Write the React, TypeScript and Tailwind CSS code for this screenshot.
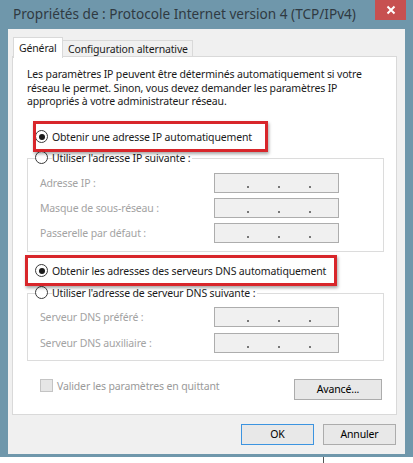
import React from "react";

const Radio = ({checked}: {checked?: boolean}) => (
  <span className="w-[13px] h-[13px] rounded-full border border-[#3a3a3a] bg-white flex items-center justify-center shrink-0">
    {checked && <span className="w-[6px] h-[6px] rounded-full bg-[#1a1a1a]" />}
  </span>
);

const IpBox = () => (
  <div className="w-[125px] h-[20px] bg-[#f0f0f0] border border-[#adadad] flex items-end pb-[4px] pl-[32px] gap-[29px]">
    <span className="w-[2px] h-[2px] bg-[#777]" />
    <span className="w-[2px] h-[2px] bg-[#777]" />
    <span className="w-[2px] h-[2px] bg-[#777]" />
  </div>
);

const Field = ({label}: {label: string}) => (
  <div className="flex items-center h-[20px]">
    <span className="w-[174px] text-[#a3a3a3]">{label}</span>
    <IpBox />
  </div>
);

const Btn = ({children, primary}: {children: React.ReactNode; primary?: boolean}) => (
  <button className={primary ? "w-[73px] h-[21px] border border-[#3c94e0] bg-[#e8e8e8] text-black" : "w-[73px] h-[21px] border border-[#acacac] bg-[#e8e8e8] text-black"}>
    {children}
  </button>
);

export default function App() {
  return (
    <div className="w-[413px] h-[463px] bg-white overflow-hidden font-['Noto_Sans',sans-serif] text-[10.5px] tracking-[-0.15px] leading-[14px] text-[#1a1a1a]">
      {/* window frame */}
      <div className="h-[457px] bg-[#6f97ab] pl-[8px] pr-[8px] pb-[5px] flex flex-col">
        <div className="h-[29px] flex items-start shrink-0">
          <div className="flex-1 min-w-0 pl-[5px] pt-[3px] text-[13.6px] tracking-normal leading-[22px] text-[#2f3a42] whitespace-nowrap">
            Propriétés de : Protocole Internet version 4 (TCP/IPv4)
          </div>
          <div className="w-[31px] h-[20px] mr-[-1px] shrink-0 bg-[#c75050] flex items-center justify-center">
            <svg width="10" height="10" viewBox="0 0 10 10">
              <path d="M1.5 1.5L8.5 8.5M8.5 1.5L1.5 8.5" stroke="white" strokeWidth="2" />
            </svg>
          </div>
        </div>

        <div className="flex-1 bg-[#f0f0f0] pl-[4px] pr-[9px] pt-[8px] pb-[9px] flex flex-col">
          {/* tabs */}
          <div className="flex items-end h-[19px] pl-[1px]">
            <div className="relative z-10 h-[21px] -mb-[2px] w-[50px] bg-white border border-b-0 border-[#d9d9d9] pl-[5px] pt-[3px] leading-[14px]">Général</div>
            <div className="h-[16px] w-[130px] bg-[#f0f0f0] border border-l-0 border-b-0 border-[#d9d9d9] pl-[5px] pt-[1px] leading-[14px] whitespace-nowrap">Configuration alternative</div>
          </div>

          {/* tab panel */}
          <div className="w-[385px] bg-white border border-[#d9d9d9] pl-[14px] pr-[13px] pt-[11px] pb-[14px] flex flex-col">
            <p className="leading-[13.5px] whitespace-nowrap">
              Les paramètres IP peuvent être déterminés automatiquement si votre
              <br />
              réseau le permet. Sinon, vous devez demander les paramètres IP
              <br />
              appropriés à votre administrateur réseau.
            </p>

            <div className="relative mt-[20px] h-[16px] flex items-center gap-[4px] pl-[8px]">
              <div className="absolute left-[6px] top-[-8px] w-[235px] h-[31px] border-[3px] border-[#d8262b] shadow-[1px_2px_3px_rgba(0,0,0,0.35)]" />
              <Radio checked />
              <span>Obtenir une adresse IP automatiquement</span>
            </div>

            <div className="mt-[13px] w-[357px] border border-[#dcdcdc] pl-[12px] pb-[8px]">
              <div className="-mt-[9px] -ml-[5px] h-[16px] flex items-center gap-[4px]">
                <Radio />
                <span className="bg-white pr-[2px]">Utiliser l'adresse IP suivante :</span>
              </div>
              <div className="mt-[7px] flex flex-col gap-[5px]">
                <Field label="Adresse IP :" />
                <Field label="Masque de sous-réseau :" />
                <Field label="Passerelle par défaut :" />
              </div>
            </div>

            <div className="relative mt-[11px] h-[16px] flex items-center gap-[4px] pl-[8px]">
              <div className="absolute left-[-2px] top-[-8px] w-[312px] h-[31px] border-[3px] border-[#d8262b] shadow-[1px_2px_3px_rgba(0,0,0,0.35)]" />
              <Radio checked />
              <span>Obtenir les adresses des serveurs DNS automatiquement</span>
            </div>

            <div className="mt-[14px] w-[357px] border border-[#dcdcdc] pl-[12px] pb-[7px]">
              <div className="-mt-[9px] -ml-[5px] h-[16px] flex items-center gap-[4px]">
                <Radio />
                <span className="bg-white pr-[2px]">Utiliser l'adresse de serveur DNS suivante :</span>
              </div>
              <div className="mt-[6px] flex flex-col gap-[6px]">
                <Field label="Serveur DNS préféré :" />
                <Field label="Serveur DNS auxiliaire :" />
              </div>
            </div>

            <div className="mt-[18px] flex items-start justify-between pr-[1px]">
              <div className="flex items-center gap-[4px] pl-[13px] h-[14px]">
                <span className="w-[13px] h-[13px] border border-[#c4c4c4] bg-[#e6e6e6]" />
                <span className="text-[#9a9a9a]">Valider les paramètres en quittant</span>
              </div>
              <button className="w-[88px] h-[21px] border border-[#acacac] bg-[#e8e8e8] text-black">Avancé...</button>
            </div>
          </div>

          {/* dialog buttons */}
          <div className="mt-[9px] flex justify-end gap-[9px]">
            <Btn primary>OK</Btn>
            <Btn>Annuler</Btn>
          </div>
        </div>
      </div>
      <div className="h-[6px] ml-[323px] border-l border-[#555]" />
    </div>
  );
}
